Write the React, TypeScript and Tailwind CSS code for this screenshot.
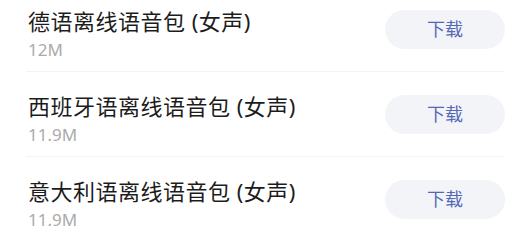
const packs = [
  { name: "德语离线语音包 (女声)", size: "12M" },
  { name: "西班牙语离线语音包 (女声)", size: "11.9M" },
  { name: "意大利语离线语音包 (女声)", size: "11.9M" },
];

export default function App() {
  return (
    <div
      className="w-[512px] h-[233px] overflow-hidden bg-white"
      style={{ fontFamily: '"Noto Sans", "Noto Sans CJK SC", sans-serif' }}
    >
      <div className="-mt-[13px] pl-[26px] pr-[7px]">
        {packs.map((p, i) => (
          <div
            key={p.name}
            className={
              "flex h-[85px] items-center justify-between " +
              (i < packs.length - 1 ? "border-b border-[#f4f4f4]" : "")
            }
          >
            <div className="mt-[8px] flex flex-col pl-[2px]">
              <span className="text-[22px] leading-[28px] tracking-[0.5px] text-[#1c1c1c]">{p.name}</span>
              <span className="mt-[5px] text-[17px] leading-[20px] text-[#ababab]">{p.size}</span>
            </div>
            <button className="h-[39px] w-[120px] rounded-full bg-[#f3f4f8] text-[18px] text-[#5568b8]">
              下载
            </button>
          </div>
        ))}
      </div>
    </div>
  );
}
